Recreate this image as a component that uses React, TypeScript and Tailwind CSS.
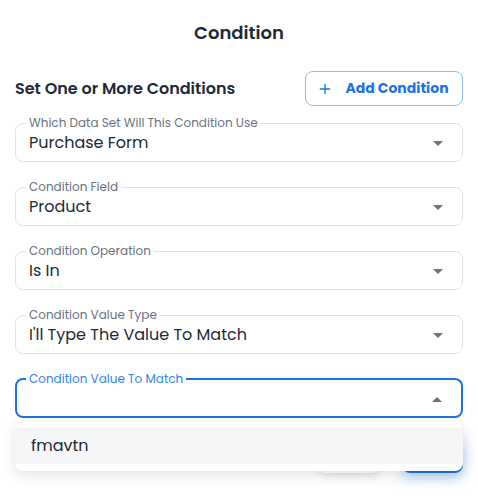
import { Plus } from "lucide-react";

const font = { fontFamily: "Poppins, Inter, 'Noto Sans', sans-serif" };

function Caret({ up = false }: { up?: boolean }) {
  return (
    <svg width="10" height="5" viewBox="0 0 10 5" className="shrink-0">
      {up ? <path d="M0 5 L5 0 L10 5 Z" fill="#6b7280" /> : <path d="M0 0 L5 5 L10 0 Z" fill="#6b7280" />}
    </svg>
  );
}

function SelectField({ label, value, active = false }: { label: string; value?: string; active?: boolean }) {
  return (
    <fieldset
      className={
        active
          ? "rounded-lg border-2 border-[#1a73e8] px-[13px] pb-[6px]"
          : "rounded-lg border border-[#dfe2e7] px-[13px] pb-[7px]"
      }
    >
      <legend
        className={
          active
            ? "-ml-[4px] px-[3px] text-[12px] leading-[14px] text-[#2f86eb]"
            : "-ml-[3px] px-[3px] text-[12px] leading-[14px] text-[#6b7280]"
        }
      >
        {label}
      </legend>
      <div className="flex h-[24px] items-center justify-between pr-[6px] pt-[2px]">
        <span className="text-[16px] leading-[22px] text-[#1f2937]">{value}</span>
        <Caret up={active} />
      </div>
    </fieldset>
  );
}

export default function App() {
  return (
    <div className="h-[501px] w-[478px] bg-white px-[15px]" style={font}>
      <h1 className="pt-[21px] text-center text-[18px] font-semibold leading-[24px] text-[#1f2937]">Condition</h1>

      <div className="mt-[26px] flex items-center justify-between">
        <h2 className="text-[16px] font-semibold text-[#1f2937]">Set One or More Conditions</h2>
        <button className="flex h-[35px] w-[158px] items-center justify-center gap-[12px] rounded-lg border border-[#8fbdf5] pr-[2px] text-[14px] font-bold text-[#1a73e8]">
          <Plus size={16} strokeWidth={2} />
          Add Condition
        </button>
      </div>

      <div className="mt-[10px] flex flex-col gap-[18px]">
        <SelectField label="Which Data Set Will This Condition Use" value="Purchase Form" />
        <SelectField label="Condition Field" value="Product" />
        <SelectField label="Condition Operation" value="Is In" />
        <SelectField label="Condition Value Type" value="I'll Type The Value To Match" />
        <div className="relative">
          <SelectField label="Condition Value To Match" active />
          <div className="absolute left-0 right-0 top-[calc(100%+3px)] z-10 rounded-lg bg-white py-[7px] shadow-[0_4px_14px_rgba(15,23,42,0.12)]">
            <div className="flex h-[36px] items-center bg-[#f5f6f8] px-[16px] text-[16px] leading-[22px] text-[#1f2937]">fmavtn</div>
          </div>
        </div>
      </div>

      <div className="mt-[19px] flex justify-end gap-[22px]">
        <button className="h-[36px] w-[62px] rounded-lg bg-white text-[14px] text-[#374151] shadow-[0_2px_8px_rgba(15,23,42,0.15)]">
          Cancel
        </button>
        <button className="h-[36px] w-[61px] rounded-lg border-2 border-[#1a73e8] bg-[#1a73e8] text-[14px] font-semibold text-white shadow-[0_4px_14px_rgba(26,115,232,0.35)]">
          Save
        </button>
      </div>
    </div>
  );
}
